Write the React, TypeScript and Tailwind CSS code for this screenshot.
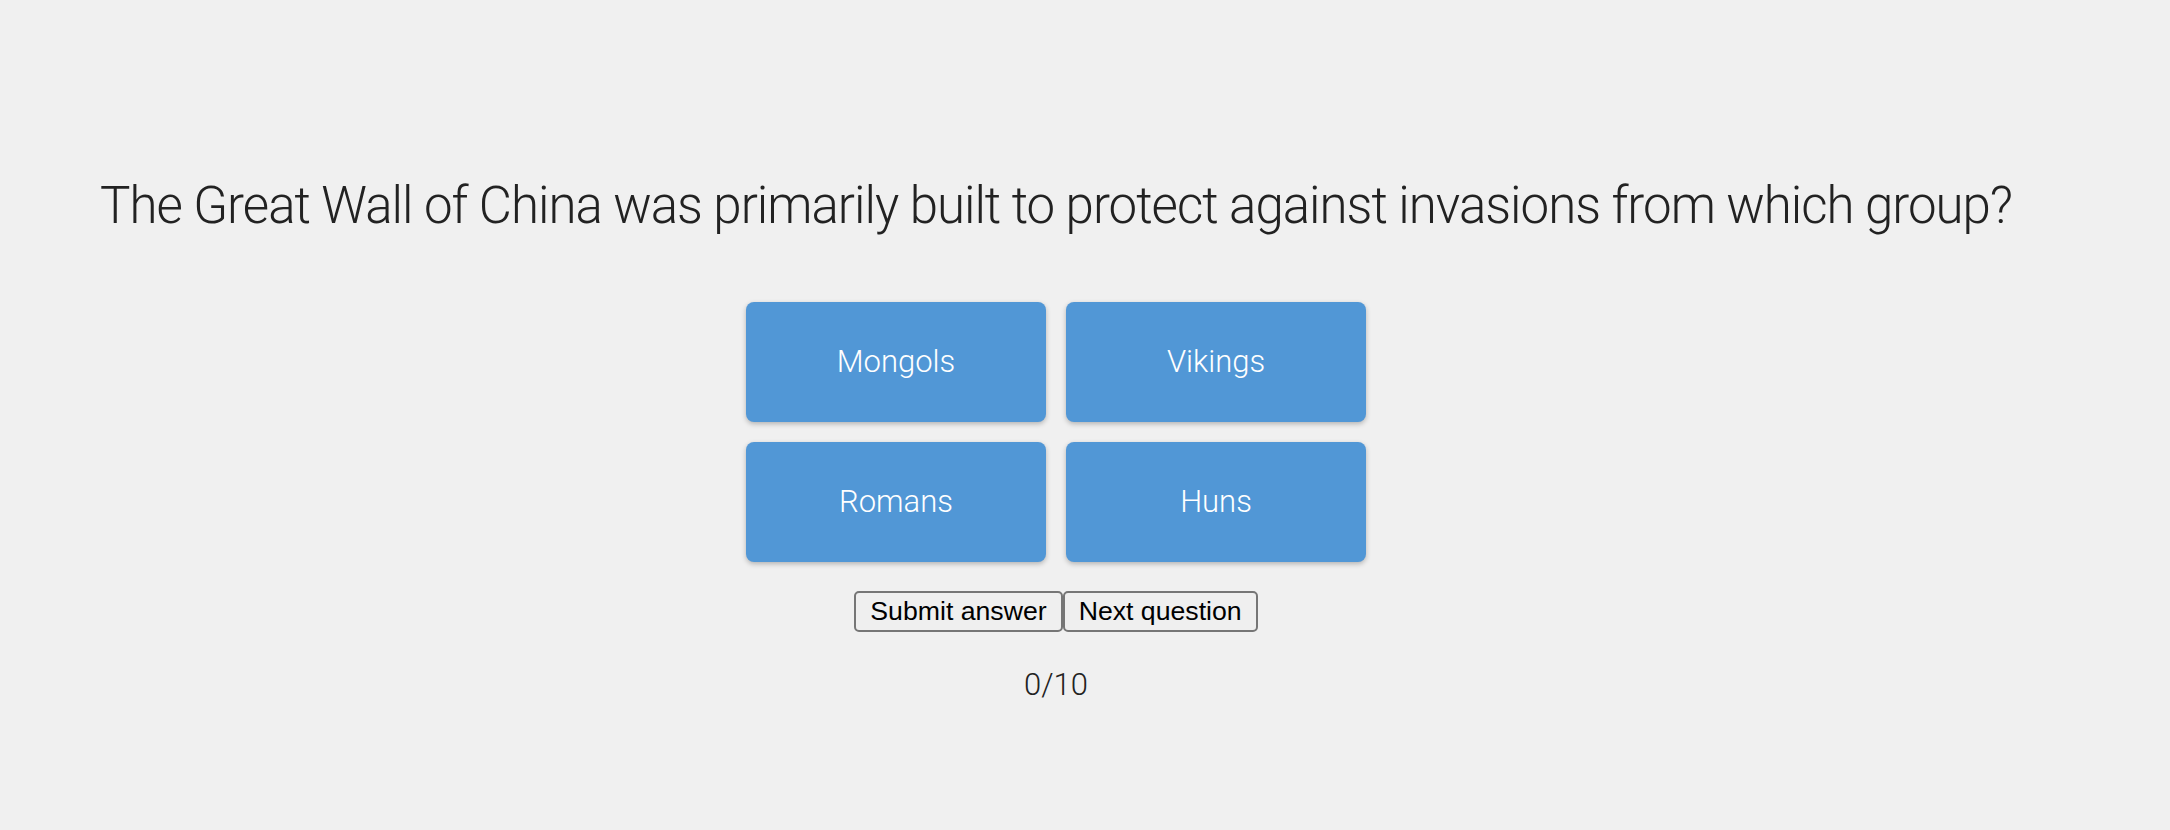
import React from 'react';

const answers = ['Mongols', 'Vikings', 'Romans', 'Huns'];

export default function App() {
  return (
    <div className="min-h-[830px] w-full bg-[#f0f0f0] text-[#222222]">
      <div className="ml-[100px] w-[1912px] pt-[174px] flex flex-col items-center">
        {/* Question */}
        <h1 className="font-['Roboto',sans-serif] font-light text-[51px] leading-[64px] tracking-[-1px] text-center whitespace-nowrap">
          The Great Wall of China was primarily built to protect against invasions from which group?
        </h1>

        {/* Answers */}
        <div className="mt-[64px] grid grid-cols-[300px_300px] gap-[20px]">
          {answers.map((a) => (
            <button
              key={a}
              className="h-[120px] rounded-[8px] bg-[#5197d6] text-white font-['Roboto',sans-serif] font-light text-[31px] shadow-[0_2px_5px_rgba(0,0,0,0.25)]"
            >
              {a}
            </button>
          ))}
        </div>

        {/* Controls */}
        <div className="mt-[29px] flex">
          <button className="px-[14px] py-[3px] border-2 border-[#767676] rounded-[5px] bg-[#efefef] text-black font-['Liberation_Sans',Arial,sans-serif] text-[26.67px] leading-[31px]">
            Submit answer
          </button>
          <button className="px-[14px] py-[3px] border-2 border-[#767676] rounded-[5px] bg-[#efefef] text-black font-['Liberation_Sans',Arial,sans-serif] text-[26.67px] leading-[31px]">
            Next question
          </button>
        </div>

        <p className="mt-[33px] font-['Roboto',sans-serif] font-light text-[31px] leading-[40px]">0/10</p>
      </div>
    </div>
  );
}
